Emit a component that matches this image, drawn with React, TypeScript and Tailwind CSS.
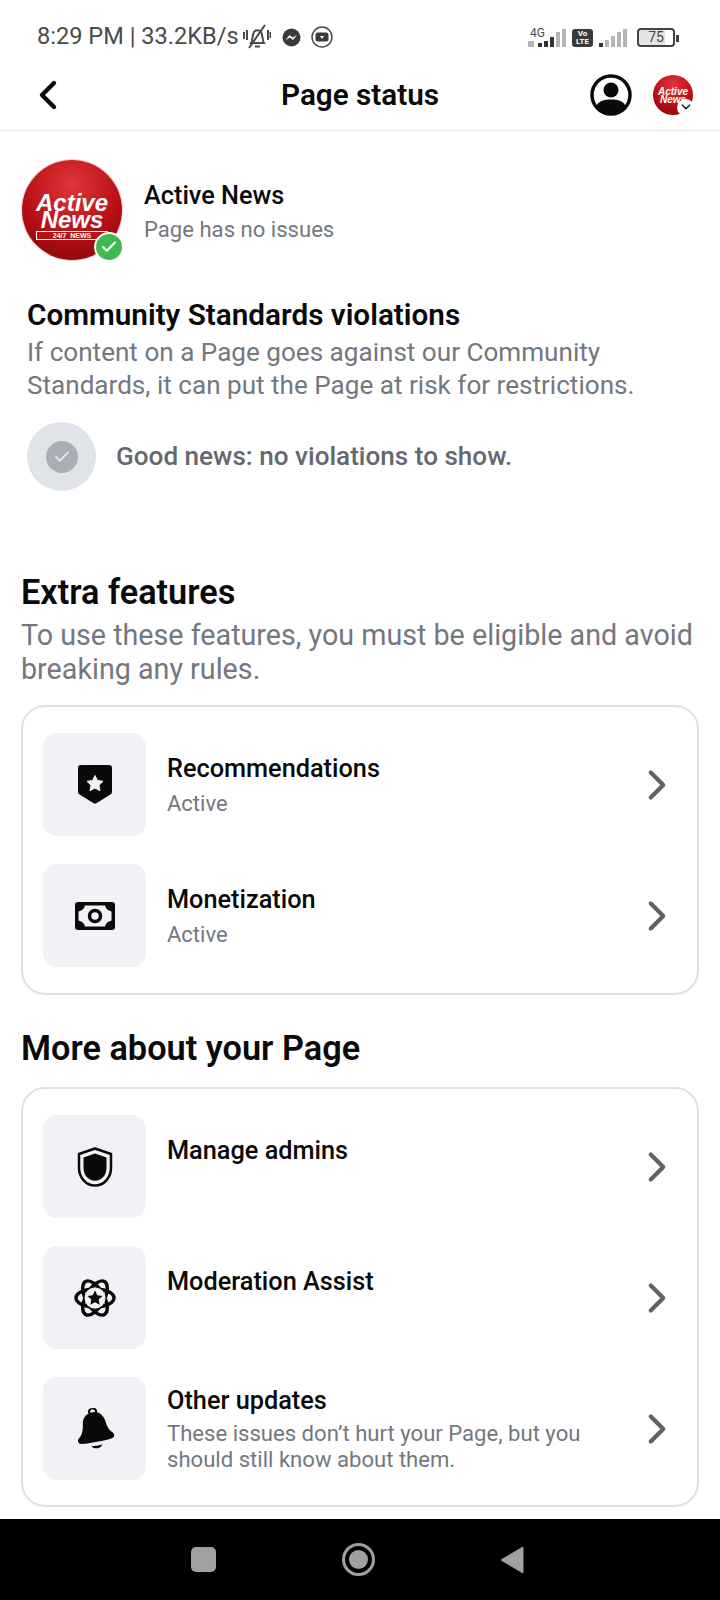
import { ChevronLeft, ChevronRight, ChevronDown, Check } from "lucide-react";
import type { ReactNode } from "react";

function ShieldStar() {
    return (
        <svg width="36" height="40" viewBox="0 0 36 40">
            <path d="M4 0h28a3 3 0 0 1 3 3v24a3 3 0 0 1-2 2.800L19 38.400a2.500 2.500 0 0 1-2 0L3 29.800A3 3 0 0 1 1 27V3a3 3 0 0 1 3-3z" fill="#0a0a0a" />
            <path d="M18 10.500l2.500 5 5.500.8-4 3.900 1 5.500-5-2.600-5 2.600 1-5.500-4-3.900 5.500-.8z" fill="#f1f2f6" stroke="#f1f2f6" strokeWidth="1" strokeLinejoin="round" />
        </svg>
    );
}

function Money() {
    return (
        <svg width="40" height="28" viewBox="0 0 40 28">
            <rect x="0" y="0" width="40" height="28" rx="3" fill="#0a0a0a" />
            <path d="M10 3.500h20c.6 3 2.500 5 6.500 6v9c-4 1-5.900 3-6.500 6H10c-.6-3-2.500-5-6.500-6v-9c4-1 5.900-3 6.500-6z" fill="#f1f2f6" />
            <circle cx="20" cy="14" r="5.500" fill="none" stroke="#0a0a0a" strokeWidth="3.500" />
        </svg>
    );
}

function Shield() {
    return (
        <svg width="36" height="40" viewBox="0 0 36 40">
            <path d="M18 1.500l16 5.500v14c0 9.500-7 17.500-16 17.500S2 30.500 2 21V7z" fill="none" stroke="#0a0a0a" strokeWidth="2.500" strokeLinejoin="round" />
            <path d="M18 6.500l11.500 4V21c0 7-5 12.800-11.500 12.800S6.500 28 6.500 21V10.500z" fill="#0a0a0a" />
        </svg>
    );
}

function Atom() {
    return (
        <svg width="42" height="40" viewBox="0 0 42 40" fill="none" stroke="#0a0a0a" strokeWidth="3.400">
            <ellipse cx="21" cy="20" rx="19" ry="9" />
            <ellipse cx="21" cy="20" rx="19" ry="9" transform="rotate(60 21 20)" />
            <ellipse cx="21" cy="20" rx="19" ry="9" transform="rotate(120 21 20)" />
            <circle cx="21" cy="20" r="10.500" fill="#f1f2f6" stroke="none" />
            <path d="M21 12.500l2.300 4.800 5.200.7-3.800 3.600 1 5.200-4.700-2.500-4.700 2.500 1-5.200-3.800-3.600 5.200-.7z" fill="#0a0a0a" stroke="none" />
        </svg>
    );
}

function Bell() {
    return (
        <svg className="-rotate-[8deg]" width="38" height="42" viewBox="0 0 38 42">
            <path d="M16 5.500a3.500 3.500 0 1 1 6 0" fill="none" stroke="#0a0a0a" strokeWidth="2" />
            <path d="M19 4c7 0 10.500 5 11.500 11 .8 5 1.500 8 5.500 12 2 2 1.500 5-1.500 5.500-8 1.500-22 2-31 1.500C.500 33.800-.500 30.500 1.500 28.500 6 24.500 7 20 7.500 15 8 9 12 4 19 4z" fill="#0a0a0a" />
            <path d="M13 37c3 1 8 1 11 0-1 4-9 5-11 0z" fill="#0a0a0a" />
        </svg>
    );
}

function Logo({ big }: { big?: boolean }) {
    return (
        <div
            className={
                big
                    ? "flex h-[100px] w-[100px] flex-col items-center justify-center rounded-full bg-[radial-gradient(circle_at_50%_25%,#e0363a_0%,#b60f14_55%,#7d0508_100%)] shadow-[0_0_0_1px_#f4cccc]"
                    : "flex h-10 w-10 flex-col items-center justify-center rounded-full bg-[radial-gradient(circle_at_50%_25%,#e0363a_0%,#b60f14_55%,#7d0508_100%)]"
            }
        >
            <span
                className={
                    big
                        ? "mt-[14px] font-['Liberation_Sans',sans-serif] text-[24px] leading-[17px] font-bold text-white italic"
                        : "mt-[3px] font-['Liberation_Sans',sans-serif] text-[10px] leading-[8px] font-bold text-white italic"
                }
            >
                Active
            </span>
            <span
                className={
                    big
                        ? "font-['Liberation_Sans',sans-serif] text-[24px] leading-[17px] font-bold text-white italic"
                        : "font-['Liberation_Sans',sans-serif] text-[10px] leading-[8px] font-bold text-white italic"
                }
            >
                News
            </span>
            {big && (
                <span className="mt-[3px] w-[72px] border border-white bg-[#b60f14] text-center font-['Liberation_Sans',sans-serif] text-[7px] leading-[7px] font-bold whitespace-pre text-white">
                    24/7  NEWS
                </span>
            )}
        </div>
    );
}

function Row({ icon, title, sub, top }: { icon: ReactNode; title: string; sub?: ReactNode; top?: boolean }) {
    return (
        <div className="flex h-[103px] items-center">
            <div className="flex h-[103px] w-[103px] shrink-0 items-center justify-center rounded-[14px] bg-[#f1f2f6]">
                {icon}
            </div>
            <div className={top ? "ml-[21px] h-full flex-1 pt-[20px]" : "ml-[21px] flex-1"}>
                <div className="text-[25.300px] leading-[32px] font-medium text-[#0a0a0a]">{title}</div>
                {sub && <div className="mt-[6px] text-[22px] leading-[26px] text-[#73777e]">{sub}</div>}
            </div>
            <ChevronRight className="-mr-[5px] shrink-0 text-[#5f6368]" size={50} strokeWidth={2} />
        </div>
    );
}

export default function App() {
    return (
        <div className="flex h-[1600px] w-[720px] flex-col overflow-hidden bg-white font-['Roboto',sans-serif]">
            {/* status bar */}
            <div className="flex h-[74px] items-center pr-[41px] pl-[37px] text-[#4a4a4a]">
                <span className="text-[23.600px] leading-none">8:29 PM | 33.2KB/s</span>
                <svg className="ml-1" width="28" height="26" viewBox="0 0 28 26" fill="none" stroke="#4a4a4a" strokeWidth="2">
                    <path d="M8 19c2-3 1-8 3-11 2-2.500 5-2.500 7 0 2 3 1 8 3 11z" />
                    <path d="M12 22.500h5M22 1L6 24M1 8v7M4 6v10M25 6v10M27.500 8v6" />
                </svg>
                <svg className="ml-[11px]" width="19" height="19" viewBox="0 0 19 19">
                    <circle cx="9.500" cy="9.500" r="9" fill="#3a3a3a" />
                    <path d="M3.500 12l4-5 3 2.500 4.500-2.500-4 5-3-2.500z" fill="#fff" />
                </svg>
                <svg className="ml-[10px]" width="22" height="22" viewBox="0 0 22 22">
                    <circle cx="11" cy="11" r="10" fill="none" stroke="#4a4a4a" strokeWidth="1.500" />
                    <rect x="4.500" y="6.500" width="13" height="9" rx="2.500" fill="#3a3a3a" />
                    <path d="M9 10h4l-2 3z" fill="#fff" />
                </svg>
                <div className="ml-auto flex items-end">
                    <div className="relative flex h-[18px] items-end gap-[2px]">
                        <span className="absolute -top-[2px] left-[2px] text-[12px] leading-none">4G</span>
                        <span className="mr-[2px] h-[6px] w-[6px] bg-[#b5b5b5]" />
                        <span className="h-[4px] w-[4px] bg-[#333]" />
                        <span className="h-[6px] w-[4px] bg-[#333]" />
                        <span className="h-[10px] w-[4px] bg-[#333]" />
                        <span className="h-[15px] w-[4px] bg-[#b5b5b5]" />
                        <span className="h-[18px] w-[4px] bg-[#b5b5b5]" />
                    </div>
                    <div className="ml-[6px] flex h-[18px] w-[21px] flex-col items-center justify-center rounded-[3px] bg-[#3a3a3a] text-[8px] leading-[8px] font-bold text-white">
                        <span>Vo</span>
                        <span>LTE</span>
                    </div>
                    <div className="ml-[6px] flex h-[18px] items-end gap-[2px]">
                        <span className="h-[4px] w-[4px] bg-[#333]" />
                        <span className="h-[7px] w-[4px] bg-[#b5b5b5]" />
                        <span className="h-[11px] w-[4px] bg-[#b5b5b5]" />
                        <span className="h-[15px] w-[4px] bg-[#b5b5b5]" />
                        <span className="h-[18px] w-[4px] bg-[#b5b5b5]" />
                    </div>
                    <div className="ml-[10px] flex h-[19px] w-[38px] items-center justify-center rounded-[4px] border-2 border-[#444] bg-[linear-gradient(90deg,#e4e4e4_75%,#fff_75%)] text-[14px] leading-none text-[#444]">
                        75
                    </div>
                    <span className="mb-[5px] ml-[1px] h-[7px] w-[3px] bg-[#444]" />
                </div>
            </div>

            {/* header */}
            <div className="flex h-[57px] items-center border-b border-[#e8e9ec] pr-[27px] pb-[15px] pl-[24px]">
                <ChevronLeft className="w-[48px] shrink-0 text-[#0a0a0a]" size={48} strokeWidth={2.2} />
                <div className="ml-[209px] text-[29.700px] leading-none font-semibold text-[#0a0a0a]">Page status</div>
                <div className="ml-auto flex items-center gap-[21px]">
                    <svg width="42" height="42" viewBox="0 0 42 42">
                        <circle cx="21" cy="21" r="19" fill="#fff" stroke="#0a0a0a" strokeWidth="3.500" />
                        <circle cx="21" cy="16" r="7.500" fill="#0a0a0a" />
                        <path d="M6 33c2-6 8-7.500 15-7.500S34 27 36 33c-4 4.500-9 6.500-15 6.500S10 37.500 6 33z" fill="#0a0a0a" />
                    </svg>
                    <div className="relative">
                        <Logo />
                        <span className="absolute -right-[1px] -bottom-[1px] flex h-[17px] w-[17px] items-center justify-center rounded-full bg-white">
                            <ChevronDown size={14} strokeWidth={3} className="text-[#222]" />
                        </span>
                    </div>
                </div>
            </div>

            {/* page info */}
            <div className="mt-[29px] flex items-center pl-[22px]">
                <div className="relative">
                    <Logo big />
                    <span className="absolute -right-[2px] -bottom-[2px] flex h-[30px] w-[30px] items-center justify-center rounded-full border-2 border-white bg-[#3fb950]">
                        <Check size={18} strokeWidth={3} className="text-white" />
                    </span>
                </div>
                <div className="ml-[22px] pt-[2px]">
                    <div className="text-[25.300px] leading-[32px] font-medium text-[#0a0a0a]">Active News</div>
                    <div className="mt-[3px] text-[22.100px] leading-[28px] text-[#73777e]">Page has no issues</div>
                </div>
            </div>

            {/* violations */}
            <div className="mt-[37px] pl-[27px]">
                <div className="text-[29.700px] leading-[36px] font-semibold text-[#0a0a0a]">Community Standards violations</div>
                <div className="mt-[3px] text-[26.100px] leading-[33px] text-[#73777e]">
                    If content on a Page goes against our Community
                    <br />
                    Standards, it can put the Page at risk for restrictions.
                </div>
                <div className="mt-[20px] flex items-center">
                    <div className="flex h-[69px] w-[69px] items-center justify-center rounded-full bg-[#e0e3e8]">
                        <div className="flex h-8 w-8 items-center justify-center rounded-full bg-[#a9aeb6]">
                            <Check size={18} strokeWidth={2.5} className="text-[#e0e3e8]" />
                        </div>
                    </div>
                    <div className="ml-[20px] text-[26.100px] font-medium text-[#65686e]">Good news: no violations to show.</div>
                </div>
            </div>

            {/* extra features */}
            <div className="mt-[80px] px-[21px]">
                <div className="text-[34.300px] leading-[42px] font-semibold text-[#0a0a0a]">Extra features</div>
                <div className="mt-[5px] text-[28.700px] leading-[34px] whitespace-nowrap text-[#73777e]">
                    To use these features, you must be eligible and avoid
                    <br />
                    breaking any rules.
                </div>
                <div className="mt-[19px] flex h-[290px] flex-col gap-[28px] rounded-[24px] border-2 border-[#dfe0e3] px-[20px] pt-[26px]">
                    <Row icon={<ShieldStar />} title="Recommendations" sub="Active" />
                    <Row icon={<Money />} title="Monetization" sub="Active" />
                </div>

                <div className="mt-[32px] text-[34.300px] leading-[42px] font-semibold text-[#0a0a0a]">More about your Page</div>
                <div className="mt-[18px] flex h-[420px] flex-col gap-[28px] rounded-[24px] border-2 border-[#dfe0e3] px-[20px] pt-[26px]">
                    <Row icon={<Shield />} title="Manage admins" top />
                    <Row icon={<Atom />} title="Moderation Assist" top />
                    <Row
                        icon={<Bell />}
                        title="Other updates"
                        sub={
                            <span className="-mt-[3px] block text-[22.100px] leading-[26px]">
                                These issues don’t hurt your Page, but you
                                <br />
                                should still know about them.
                            </span>
                        }
                    />
                </div>
            </div>

            {/* nav bar */}
            <div className="mt-auto flex h-[81px] items-center bg-black pl-[191px]">
                <span className="h-[25px] w-[25px] rounded-[5px] bg-[#a0a0a0]" />
                <span className="ml-[126px] flex h-[33px] w-[33px] items-center justify-center rounded-full border-[3px] border-[#a0a0a0]">
                    <span className="h-[19px] w-[19px] rounded-full bg-[#a0a0a0]" />
                </span>
                <svg className="ml-[125px]" width="24" height="28" viewBox="0 0 24 28">
                    <path d="M23 1v26L1 14z" fill="#a0a0a0" stroke="#a0a0a0" strokeWidth="1" strokeLinejoin="round" />
                </svg>
            </div>
        </div>
    );
}
